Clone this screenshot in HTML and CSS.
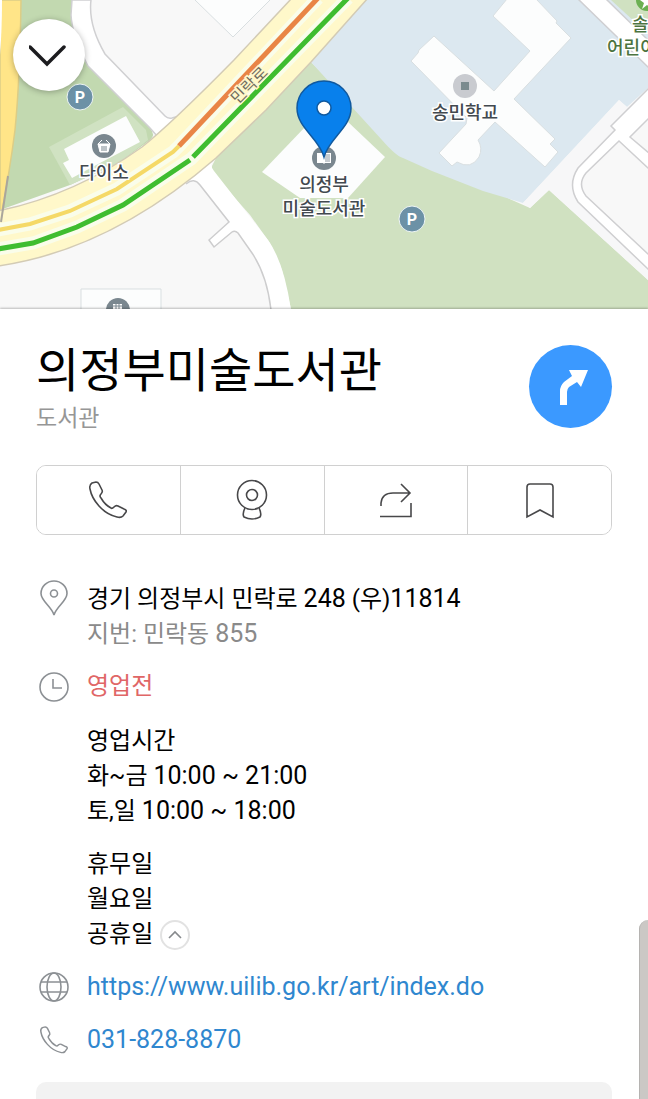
FILE: index.html
```html
<!DOCTYPE html>
<html lang="ko">
<head>
    <meta charset="UTF-8">
    <meta name="viewport" content="width=device-width, initial-scale=1.0">
    <title>의정부미술도서관</title>
    <link rel="stylesheet" href="styles.css">
</head>
<body>

<div class="map">
    <svg class="map-canvas" viewBox="0 0 648 309" preserveAspectRatio="xMidYMid slice">
        <rect width="648" height="309" fill="#f8f8f8"/>

        <!-- parks -->
        <path d="M18 0H72L71 15L78 45L88 66L150 128Q156 135 150 140L120 162L70 185L0 210Z" fill="#c2d9b0"/>
        <path d="M49 147L123 107L146 130L148 140L120 162L70 185Z" fill="#d0e2c2"/>
        <path d="M311 62L216 158L210 170L250 215L270 243L282 270L291 309H648V280L549 190L530 208L400 150Z" fill="#d0e1c1"/>

        <!-- school grounds -->
        <path d="M366 0L311 62L351 106L382 140Q396 156 403 158L432 171L483 191L523 203L619 100L627 107L648 88V0Z" fill="#dce8f0"/>
        <path d="M619 100L627 107L648 90V280L549 190L530 208L523 203Z" fill="#f7f7f8"/>

        <!-- small roads -->
        <path d="M72 0L71 15Q72 35 88 66L150 128L165 145L200 110L172 118Q168 119 165 116L105 54Q88 25 91 0Z" fill="#fff" stroke="#d0d0d2" stroke-width="1.5"/>
        <path d="M578 -1L649 68V41L606 -1Z" fill="#fff" stroke="#cfcfd2" stroke-width="1.5"/>
        <path d="M611 0H648V34Z" fill="#d0e1c1"/>
        <path d="M649 88L611 126L615 130L578 168Q567 185 578 202L649 270V86Z" fill="#fff" stroke="#cfcfd1" stroke-width="1.5"/>
        <path d="M649 118L630 137L649 153Z" fill="#f8f8f8" stroke="#cfcfd1" stroke-width="1.5"/>
        <path d="M619 141L649 169V255L586 196Q577 184 586 173Z" fill="#f8f8f8" stroke="#cfcfd1" stroke-width="1.5"/>
        <path d="M186 184Q194 177 200 185L229 222L209 240L214 247L232 232Q235 230 238 233L252 253Q267 275 271 310H291Q284 262 268 240L214 171Q208 164 216 156Z" fill="#fff"/>
        <path d="M186 184Q194 177 200 185L229 222L209 240L214 247L232 232Q235 230 238 233L252 253Q267 275 271 310" fill="none" stroke="#cdcdce" stroke-width="1.5"/>

        <!-- left road -->
        <path d="M0 0H21Q20 80 15 130Q10 170 0 222Z" fill="#ffe588" stroke="#dccd86" stroke-width="1.5"/>
        <path d="M-1 0H2Q2 30 0 55H-1Z" fill="#fff"/>

        <!-- main road -->
        <path d="M-2 211Q75 195 142 147Q170 125 234 60L292 -2H368L311 62L266 110L216 158Q110 250 -2 266Z" fill="#fff8ca" stroke="#d3cbb5" stroke-width="1.5"/>
        <path d="M8 176L1 222" stroke="#aaa69c" stroke-width="2"/>
        <g fill="none">
            <path d="M-2 230L30 224L70 211L117 189L173 152L179 146L318 -2M-2 249L33 243L77 227L123 205L191 159L348 -2" stroke="#fafdea" stroke-width="13"/>
            <path d="M-2 230L30 224L70 211L117 189L173 152L179 146" stroke="#f5d967" stroke-width="4"/>
            <path d="M179 146L318 -2" stroke="#e98546" stroke-width="5"/>
            <path d="M-2 249L33 243L77 227L123 205L190 160M193 157L348 -2" stroke="#3fbd30" stroke-width="5"/>
        </g>

        <!-- buildings -->
        <g fill="#fcfdfd" stroke="#d9dfe1" stroke-width="1">
            <path d="M195 0L233 37L270 0"/>
            <path d="M64 149L126 116L140 142L100 163L72 178L63 163L69 160Z" stroke="none"/>
            <path d="M262 172L328 103L385 157L348 198H300Z" stroke="none"/>
            <path d="M81 310V289H161V310"/>
            <path d="M507 -1L493 16L530 51L494 91L434 36L419 50L418 53L411 61L467 118L466 124L439 153L452 166L457 162Q471 170 479 157Q483 148 478 140L495 122L545 167L558 152L550 144L555 139L514 99L571 38L556 23L557 21L536 -1Z"/>
        </g>

        <!-- places -->
        <g stroke="#eef5f5" stroke-width="1">
            <circle cx="80" cy="97" r="13" fill="#6c91a6"/>
            <circle cx="412" cy="219" r="13" fill="#6c91a6"/>
        </g>
        <g fill="#7a878f">
            <circle cx="104" cy="146" r="12"/>
            <circle cx="118" cy="310" r="12"/>
            <circle cx="324" cy="158" r="12"/>
        </g>
        <circle cx="465" cy="86" r="12" fill="#c9cbd0"/>
        <rect x="461" y="82" width="8" height="8" fill="#7b8b8f"/>
        <circle cx="647" cy="0" r="11" fill="#6cb052"/>
        <path d="M648 -6L649 0H655L650 3L652 9L647 5L642 9L644 3L640 0H645Z" fill="#fff"/>
        <path d="M98 144H110L108 152H100ZM98 144L102 140M110 144L106 140" fill="#fff" stroke="#fff" stroke-width="1"/>
        <path d="M102 146V151M104 146V151M106 146V151" stroke="#7a878f" stroke-width="1"/>
        <path d="M113 304H122V309H113Z" fill="#fff"/>
        <path d="M116 304V309M119 304V309M113 306H122" stroke="#7a878f" stroke-width="1"/>
        <path d="M317 153H323L324 155L325 153H331V163H325L324 164L323 163H317Z" fill="#fff"/>
        <path d="M325 154H330V162H325Z" fill="#c5cbd0"/>

        <g class="map-symbol">
            <text x="80" y="103">P</text>
            <text x="412" y="225">P</text>
        </g>
        <g class="map-label">
            <text x="104" y="179">다이소</text>
            <text x="465" y="119">송민학교</text>
            <text x="324" y="191">의정부</text>
            <text x="324" y="215">미술도서관</text>
        </g>
        <g class="map-label map-label-green">
            <text x="632" y="31">솔뫼</text>
            <text x="607" y="54">어린이공원</text>
        </g>
        <text class="map-road" x="249" y="91" transform="rotate(-45 249 85)">민락로</text>

        <path d="M324 157C319 138 297 128 297 108A27 27 0 0 1 351 108C351 128 329 138 324 157Z" fill="#0880ec" stroke="#10599f" stroke-width="1.5"/>
        <circle cx="324" cy="108" r="7" fill="#fff" stroke="#10599f" stroke-width="1.5"/>
    </svg>
    <button class="map-close" aria-label="닫기">
        <svg width="40" height="24" viewBox="0 0 40 24"><path d="M1 4L18 21L35 4" fill="none" stroke="#1c1c1f" stroke-width="3.5" stroke-linecap="round"/></svg>
    </button>
</div>

<main class="panel">
    <header class="place-header">
        <div>
            <h1 class="place-name">의정부미술도서관</h1>
            <p class="place-type">도서관</p>
        </div>
        <button class="route-button" aria-label="길찾기">
            <svg width="83" height="83" viewBox="0 0 83 83"><path d="M31 60V46Q31 41 35 37L43 31L40 25H59L52 42L48 37L40 42Q38 44 38 47V60Z" fill="#fff"/></svg>
        </button>
    </header>

    <div class="actions">
        <button class="action" aria-label="전화">
            <svg class="action-icon" viewBox="0 0 44 44"><use href="#phone"/></svg>
        </button>
        <button class="action" aria-label="거리뷰">
            <svg class="action-icon" viewBox="0 0 44 44"><circle cx="22" cy="17" r="14.5"/><circle cx="22" cy="17" r="5.5"/><path d="M15 30Q12 36 14 39Q22 43 30 39Q32 36 29 30"/></svg>
        </button>
        <button class="action" aria-label="공유">
            <svg class="action-icon" viewBox="0 0 44 44"><path d="M7 28V25Q8 15 19 15H36M27 6L36 15L27 24M6 38.5H37V25"/></svg>
        </button>
        <button class="action" aria-label="저장">
            <svg class="action-icon" viewBox="0 0 44 44"><path d="M9 39V9Q9 6 12 6H32Q35 6 35 9V39L22 32Z"/></svg>
        </button>
    </div>

    <div class="details">
        <div class="row">
            <svg class="row-icon" viewBox="0 0 36 36"><path d="M18 33C16 25 5 19 5 11.5A13 12.5 0 0 1 31 11.5C31 19 20 25 18 33Z"/><circle cx="18" cy="11.5" r="3.5"/></svg>
            <div>
                <p>경기 의정부시 민락로 <span class="num">248</span> (우)<span class="num">11814</span></p>
                <p class="muted">지번: 민락동 <span class="num">855</span></p>
            </div>
        </div>
        <div class="row">
            <svg class="row-icon" viewBox="0 0 36 36"><circle cx="18" cy="18" r="14"/><path d="M17 10V19H26"/></svg>
            <div>
                <p class="closed">영업전</p>
                <div class="hours">
                    <p>영업시간</p>
                    <p>화~금 <span class="num">10:00 ~ 21:00</span></p>
                    <p>토,일 <span class="num">10:00 ~ 18:00</span></p>
                </div>
                <div class="holidays">
                    <p>휴무일</p>
                    <p>월요일</p>
                    <p class="last-day">공휴일
                        <button class="fold" aria-label="접기">
                            <svg width="16" height="10" viewBox="0 0 16 10"><path d="M2 8L8 2L14 8" fill="none" stroke="#86898c" stroke-width="1.6"/></svg>
                        </button>
                    </p>
                </div>
            </div>
        </div>
        <div class="row">
            <svg class="row-icon" viewBox="0 0 36 36"><circle cx="18" cy="18" r="14"/><ellipse cx="18" cy="18" rx="7" ry="14"/><path d="M5 13H31M5 23H31"/></svg>
            <a class="link" href="https://www.uilib.go.kr/art/index.do">https://www.uilib.go.kr/art/index.do</a>
        </div>
        <div class="row">
            <svg class="row-icon row-phone" viewBox="0 0 44 44"><use href="#phone"/></svg>
            <a class="link" href="tel:031-828-8870">031-828-8870</a>
        </div>
    </div>

    <div class="notice"></div>
</main>

<div class="edge-handle"></div>

<svg class="symbols">
    <symbol id="phone" viewBox="0 0 44 44">
        <path d="M6 5L10 4Q12 4 13 6L16 12Q17 14 15 16Q13 18 15 20Q19 27 25 30Q26 31 28 29Q30 27 32 28L38 31Q41 32 40 34L37 38Q35 40 31 39C17 36 6 22 4 11Q3 7 6 5Z"/>
    </symbol>
</svg>

</body>
</html>
```

FILE: styles.css
```css
* {
    box-sizing: border-box;
}
body {
    display: flex;
    flex-direction: column;
    min-height: 100vh;
    margin: 0;
    background-color: #fff;
    color: #000;
    font-family: Roboto, "Noto Sans CJK KR", sans-serif;
    font-size: 24px;
    line-height: 35px;
}
h1, p {
    margin: 0;
}
button {
    display: flex;
    align-items: center;
    justify-content: center;
    padding: 0;
    border: none;
    background-color: #fff;
    cursor: pointer;
}
.map {
    position: relative;
    height: 309px;
}
.map-canvas {
    display: block;
    width: 100%;
    height: 100%;
}
.map-label {
    font-size: 18px;
    font-weight: 500;
    text-anchor: middle;
    fill: #42494f;
    stroke: #fff;
    stroke-width: 3px;
    paint-order: stroke;
}
.map-label-green {
    text-anchor: start;
    fill: #4c7440;
}
.map-symbol {
    font-size: 16px;
    font-weight: bold;
    text-anchor: middle;
    fill: #fff;
}
.map-road {
    font-size: 16px;
    text-anchor: middle;
    fill: #6f6b5e;
    stroke: #fff8ca;
    stroke-width: 3px;
    paint-order: stroke;
}
.map-close {
    position: absolute;
    top: 19px;
    left: 13px;
    width: 72px;
    height: 72px;
    border-radius: 50%;
    box-shadow: 0 1px 6px rgba(0, 0, 0, 0.3);
}
.panel {
    position: relative;
    display: flex;
    flex: 1;
    flex-direction: column;
    padding: 32px 36px 0;
    background-color: #fff;
    box-shadow: 0 -1px 2px rgba(0, 0, 0, 0.25);
}
.place-header {
    display: flex;
    align-items: flex-start;
    justify-content: space-between;
}
.place-name {
    font-size: 47px;
    font-weight: normal;
    line-height: 60px;
}
.place-type {
    color: #969696;
    font-size: 23px;
    line-height: 36px;
}
.route-button {
    width: 83px;
    height: 83px;
    margin-top: 4px;
    border-radius: 50%;
    background-color: #3b99ff;
}
.actions {
    display: flex;
    height: 70px;
    margin-top: 28px;
    border: 1px solid #d0d0d0;
    border-radius: 10px;
    overflow: hidden;
}
.action {
    flex: 1;
}
.action + .action {
    border-left: 1px solid #d0d0d0;
}
.action-icon {
    width: 44px;
    height: 44px;
    fill: none;
    stroke: #48484a;
    stroke-width: 1.6;
}
.details {
    display: flex;
    flex-direction: column;
    gap: 17px;
    margin-top: 47px;
}
.row {
    display: grid;
    grid-template-columns: 36px 1fr;
    gap: 15px;
}
.row-icon {
    width: 36px;
    height: 36px;
    overflow: visible;
    fill: none;
    stroke: #8c9094;
    stroke-width: 1.6;
}
.row-phone {
    padding: 2px;
    stroke-width: 2;
}
.num {
    font-size: 25px;
    line-height: 1;
}
.link {
    color: #2f87cf;
    font-size: 25px;
    text-decoration: none;
}
.muted {
    color: #8a8a8a;
}
.closed {
    color: #e06666;
}
.hours {
    margin-top: 20px;
}
.holidays {
    margin-top: 18px;
}
.last-day {
    display: flex;
    align-items: center;
    gap: 7px;
}
.fold {
    width: 30px;
    height: 30px;
    border: 2px solid #e2e2e2;
    border-radius: 50%;
}
.notice {
    flex: 1;
    margin-top: 24px;
    border-radius: 10px 10px 0 0;
    background-color: #f2f2f2;
}
.edge-handle {
    position: fixed;
    right: 0;
    bottom: 0;
    width: 9px;
    height: 179px;
    border-left: 1px solid #b5b3b1;
    border-radius: 9px 0 0 0;
    background-color: #cbc8c5;
}
.symbols {
    position: absolute;
    width: 0;
    height: 0;
}
```
